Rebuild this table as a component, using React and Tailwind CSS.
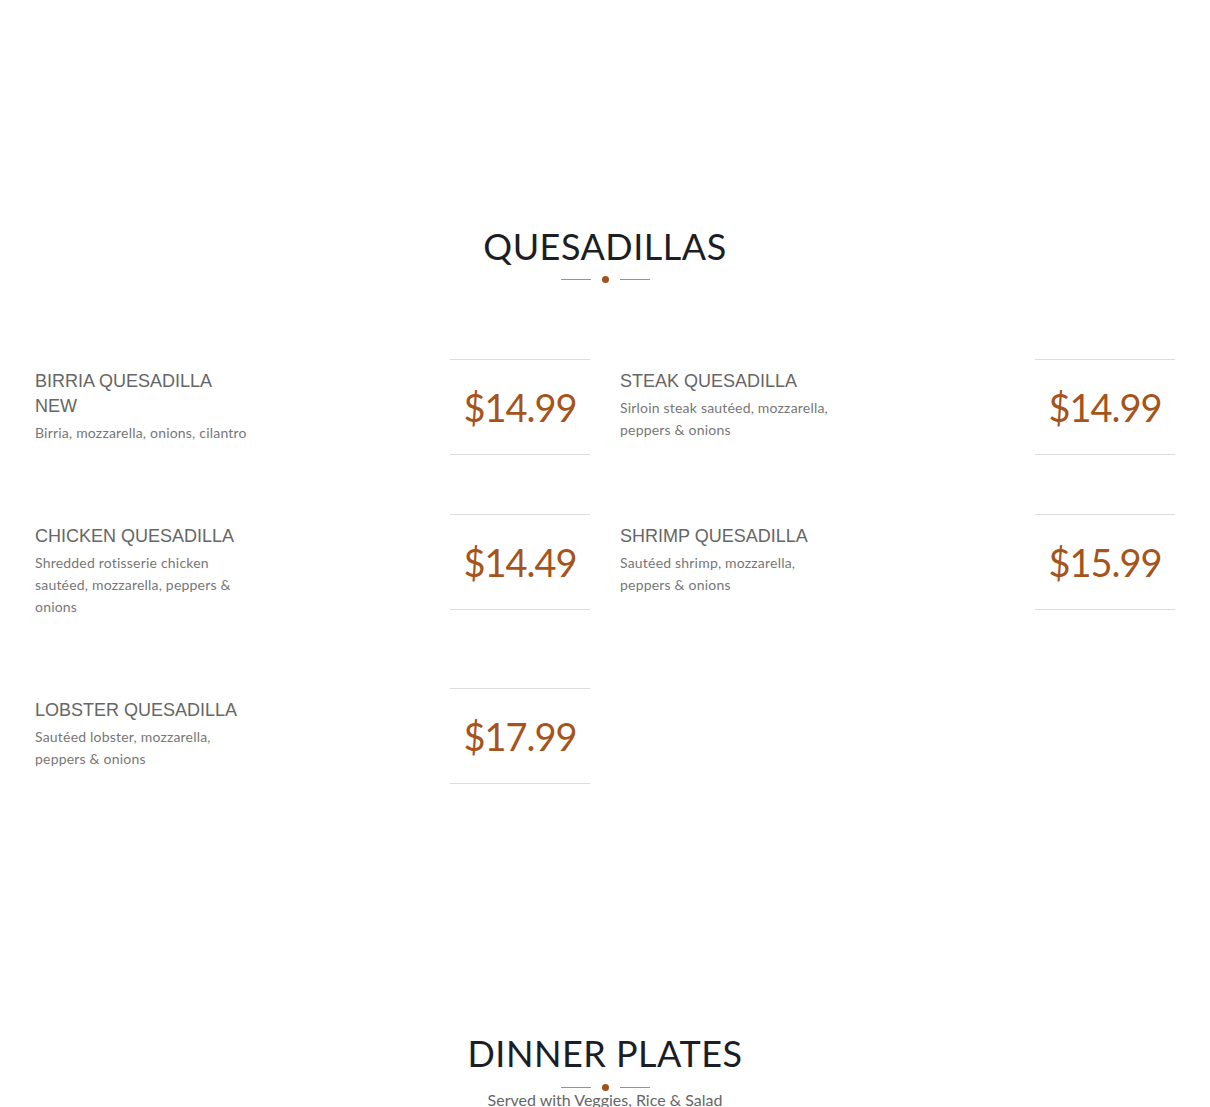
import React from "react";

const items = [
  { name: "BIRRIA QUESADILLA NEW", desc: "Birria, mozzarella, onions, cilantro", price: "$14.99" },
  { name: "STEAK QUESADILLA", desc: "Sirloin steak sautéed, mozzarella, peppers & onions", price: "$14.99" },
  { name: "CHICKEN QUESADILLA", desc: "Shredded rotisserie chicken sautéed, mozzarella, peppers & onions", price: "$14.49" },
  { name: "SHRIMP QUESADILLA", desc: "Sautéed shrimp, mozzarella, peppers & onions", price: "$15.99" },
  { name: "LOBSTER QUESADILLA", desc: "Sautéed lobster, mozzarella, peppers & onions", price: "$17.99" },
];

function Divider() {
  return (
    <div className="flex items-center justify-center gap-[11px]">
      <div className="h-px w-[30px] bg-[#b38b66]" />
      <div className="h-[7px] w-[7px] rounded-full bg-[#a0521a]" />
      <div className="h-px w-[30px] bg-[#b38b66]" />
    </div>
  );
}

function Item({ item }) {
  return (
    <div className="flex items-start justify-between">
      <div className="w-[218px] pt-[10px] pb-[11px]">
        <div className="text-[18px] leading-[25px] text-[#666] font-['Liberation_Sans',sans-serif]">{item.name}</div>
        <div className="mt-[3px] text-[14px] leading-[22px] text-[#777] font-['Lato',sans-serif] tracking-[0.2px]">{item.desc}</div>
      </div>
      <div className="flex h-[96px] w-[140px] items-center justify-center border-y border-[#ddd]">
        <span className="text-[38px] font-normal tracking-[-1px] text-[#a5541c] font-['Lato',sans-serif]">{item.price}</span>
      </div>
    </div>
  );
}

export default function App() {
  return (
    <div className="min-h-[1107px] bg-white font-['Lato',sans-serif]">
      <div className="pt-[224px] text-center">
        <h2 className="text-[36px] leading-[44px] tracking-[0.5px] text-[#1c1e26] font-['Lato',sans-serif]">QUESADILLAS</h2>
        <div className="mt-[8px]"><Divider /></div>
      </div>
      <div className="mx-[35px] mt-[76px] grid grid-cols-2 gap-x-[30px] gap-y-[59px] items-start">
        {items.map((it) => (
          <Item key={it.name} item={it} />
        ))}
      </div>
      <div className="pt-[247px] text-center">
        <h2 className="text-[36px] leading-[44px] tracking-[0.5px] text-[#1c1e26] font-['Lato',sans-serif]">DINNER PLATES</h2>
        <div className="mt-[9px]"><Divider /></div>
        <div className="mt-0 text-[16px] leading-[18px] text-[#666] font-['Lato',sans-serif]">Served with Veggies, Rice &amp; Salad</div>
      </div>
    </div>
  );
}
